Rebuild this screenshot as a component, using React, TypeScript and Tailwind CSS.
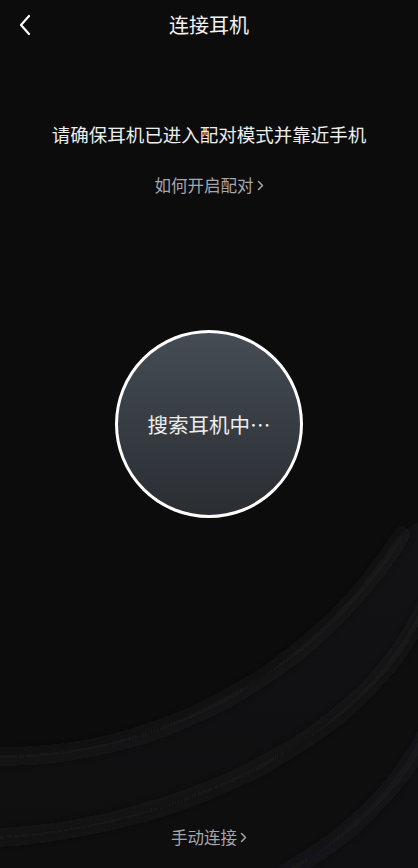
import React from "react";

export default function App() {
  return (
    <div
      className="relative w-[418px] h-[868px] overflow-hidden bg-[#0c0c0d] text-white"
      style={{ fontFamily: '"Noto Sans CJK SC", "Noto Sans", sans-serif' }}
    >
      <svg className="absolute inset-0" width="418" height="868" viewBox="0 0 418 868">
        <defs>
          <filter id="blur6" x="-20%" y="-20%" width="140%" height="140%">
            <feGaussianBlur stdDeviation="6" />
          </filter>
          <linearGradient id="band1" x1="0" y1="0" x2="0" y2="1">
            <stop offset="0" stopColor="#131315" />
            <stop offset="1" stopColor="#0e0e0f" />
          </linearGradient>
        </defs>
        <path d="M-10 756 C 120 762, 300 700, 405 530 L 440 510 L 440 900 L -10 900 Z" fill="url(#band1)" />
        <path d="M-10 756 C 120 762, 300 700, 405 530" stroke="#1c1c1f" strokeWidth="8" fill="none" filter="url(#blur6)" />
        <path d="M-10 838 C 140 832, 360 760, 428 600 L 440 600 L 440 900 L -10 900 Z" fill="#0e0e0f" />
        <path d="M-10 838 C 140 832, 360 760, 428 600" stroke="#1b1b1e" strokeWidth="8" fill="none" filter="url(#blur6)" />
        <path d="M280 875 C 340 845, 400 790, 428 730 L 440 730 L 440 900 Z" fill="#101012" />
        <path d="M280 875 C 340 845, 400 790, 428 730" stroke="#1d1d20" strokeWidth="8" fill="none" filter="url(#blur6)" />
      </svg>

      <div className="relative flex flex-col items-center h-full">
        <div className="relative w-full h-[50px] flex items-center justify-center">
          <svg className="absolute left-[18px] top-[14px]" width="14" height="22" viewBox="0 0 14 22">
            <path d="M11 2 L3 11 L11 20" stroke="#ffffff" strokeWidth="2.2" fill="none" strokeLinecap="round" strokeLinejoin="round" />
          </svg>
          <span className="text-[20px] leading-none text-[#f2f2f2]">连接耳机</span>
        </div>

        <div className="mt-[72px] text-[18.5px] leading-[24px] text-[#eeeeee]">请确保耳机已进入配对模式并靠近手机</div>

        <div className="mt-[28px] flex items-center text-[16.5px] leading-[22px] text-[#a6a6ae]">
          <span>如何开启配对</span>
          <svg className="ml-[3px]" width="7" height="11" viewBox="0 0 7 11">
            <path d="M1.5 1.5 L5.5 5.5 L1.5 9.5" stroke="#a6a6ae" strokeWidth="1.5" fill="none" strokeLinecap="round" strokeLinejoin="round" />
          </svg>
        </div>

        <div className="mt-[134px] w-[188px] h-[188px] rounded-full border-[3px] border-white bg-gradient-to-b from-[#454c54] to-[#2a2e33] flex items-center justify-center">
          <span className="text-[20.5px] leading-none text-[#ededed]">搜索耳机中…</span>
        </div>

        <div className="mt-auto mb-[20px] flex items-center text-[16.5px] leading-[22px] text-[#a6a6ae]">
          <span>手动连接</span>
          <svg className="ml-[3px]" width="7" height="11" viewBox="0 0 7 11">
            <path d="M1.5 1.5 L5.5 5.5 L1.5 9.5" stroke="#a6a6ae" strokeWidth="1.5" fill="none" strokeLinecap="round" strokeLinejoin="round" />
          </svg>
        </div>
      </div>
    </div>
  );
}
